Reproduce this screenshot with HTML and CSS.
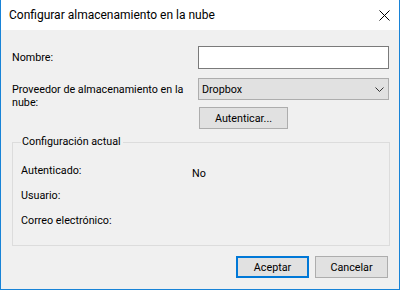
FILE: index.html
```html
<!DOCTYPE html>
<html lang="es">
<head>
<meta charset="utf-8">
<title>Configurar almacenamiento en la nube</title>
<link rel="stylesheet" href="styles.css">
</head>
<body>
<div class="window">
  <div class="titlebar">
    <span class="title">Configurar almacenamiento en la nube</span>
    <svg class="close" width="11" height="11" viewBox="0 0 11 11"><path d="M0.5 0.5 L10.5 10.5 M10.5 0.5 L0.5 10.5" stroke="#000" stroke-width="1" fill="none"/></svg>
  </div>
  <div class="content">
    <div class="form">
      <label class="lbl lbl-name">Nombre:</label>
      <div class="input"></div>
      <label class="lbl lbl-provider">Proveedor de almacenamiento en la<br>nube:</label>
      <div class="select">
        <span>Dropbox</span>
        <svg class="chev" width="9" height="5" viewBox="0 0 9 5"><path d="M0.5 0.5 L4.5 4.5 L8.5 0.5" stroke="#333" stroke-width="1" fill="none"/></svg>
      </div>
      <div class="btn btn-auth">Autenticar...</div>
    </div>
    <fieldset class="group">
      <legend>Configuración actual</legend>
      <div class="info">
        <span class="key">Autenticado:</span><span class="val">No</span>
        <span class="key">Usuario:</span><span class="val"></span>
        <span class="key">Correo electrónico:</span><span class="val"></span>
      </div>
    </fieldset>
    <div class="actions">
      <div class="btn btn-default">Aceptar</div>
      <div class="btn">Cancelar</div>
    </div>
  </div>
</div>
</body>
</html>
```
FILE: styles.css
```css
html, body {
  margin: 0;
  padding: 0;
  background: #f0f0f0;
}
body {
  font-family: Roboto, "Liberation Sans", sans-serif;
  font-size: 10.75px;
  color: #000;
}
.window {
  width: 400px;
  height: 290px;
  box-sizing: border-box;
  border: 1px solid #1883d7;
  border-top: none;
  background: #f0f0f0;
  display: flex;
  flex-direction: column;
}
.titlebar {
  height: 30px;
  flex: none;
  background: #fff;
  display: flex;
  align-items: center;
  justify-content: space-between;
  padding: 0 9px 0 8px;
}
.title {
  font-size: 12px;
  line-height: 16px;
  white-space: nowrap;
}
.close {
  display: block;
}
.content {
  padding: 0 9px 0 11px;
}
.form {
  margin-top: 16px;
  display: grid;
  grid-template-columns: 186px 191px;
  grid-template-rows: 23px 22px 22px;
  row-gap: 9px;
}
.form .btn-auth {
  margin-top: -2px;
}
.lbl {
  line-height: 13px;
  white-space: nowrap;
}
.lbl-name {
  align-self: center;
}
.lbl-provider {
  grid-row: 2 / span 2;
  padding-top: 5px;
}
.input {
  box-sizing: border-box;
  border: 1px solid #7a7a7a;
  background: #fff;
}
.select {
  box-sizing: border-box;
  border: 1px solid #adadad;
  background: #e1e1e1;
  display: flex;
  align-items: center;
  justify-content: space-between;
  padding: 0 4px 0 3px;
}
.chev {
  display: block;
}
.btn {
  box-sizing: border-box;
  height: 22px;
  border: 1px solid #adadad;
  background: #e1e1e1;
  display: flex;
  align-items: center;
  justify-content: center;
  white-space: nowrap;
}
.btn-auth {
  width: 89px;
  margin-left: 1px;
  grid-column: 2;
}
.group {
  margin: 4px 0 0 0;
  padding: 0 9px 0 8px;
  height: 111px;
  box-sizing: border-box;
  border: 1px solid #dcdcdc;
  min-width: 0;
}
.group legend {
  padding: 0 2px 0 1px;
  line-height: 14px;
}
.info {
  display: grid;
  grid-template-columns: 171px 1fr;
  grid-auto-rows: 25px;
  margin-top: 15px;
  line-height: 13px;
}
.key {
  white-space: nowrap;
}
.val {
  padding-top: 3px;
}
.actions {
  display: flex;
  justify-content: flex-end;
  gap: 6px;
  margin-top: 10px;
  padding-right: 2px;
}
.actions .btn {
  width: 73px;
}
.btn-default {
  border: 2px solid #0078d7;
}
```
